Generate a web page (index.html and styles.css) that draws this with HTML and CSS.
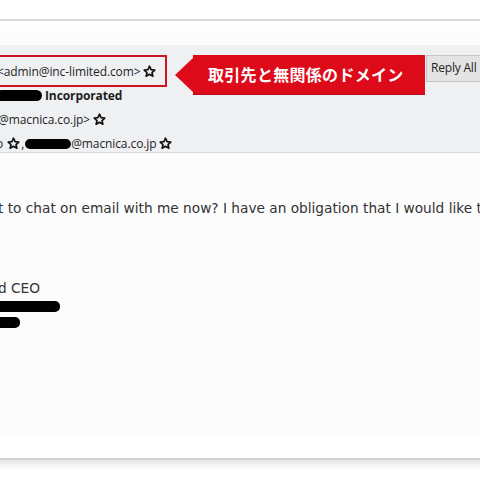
FILE: index.html
```html
<!DOCTYPE html>
<html>
<head>
<meta charset="utf-8">
<link rel="stylesheet" href="styles.css">
</head>
<body>
<div class="topbar"></div>
<div class="spacer"></div>
<div class="header">
  <div class="row row1">
    <div class="redbox">
      <span class="addr">&lt;admin@inc-limited.com&gt;</span>
      <svg class="star" viewBox="0 0 14 14"><path d="M7 1.3 8.7 5 12.7 5.4 9.7 8.1 10.6 12.1 7 10 3.4 12.1 4.3 8.1 1.3 5.4 5.3 5Z"/></svg>
    </div>
    <div class="callout">
      <div class="arrow"></div>
      <div class="callout-box">取引先と無関係のドメイン</div>
    </div>
    <div class="reply">Reply All</div>
  </div>
  <div class="row row2">
    <span class="blob blob-a"></span>
    <span class="bold">Incorporated</span>
  </div>
  <div class="row row3">
    <span class="shift3">@macnica.co.jp&gt;</span>
    <svg class="star" viewBox="0 0 14 14"><path d="M7 1.3 8.7 5 12.7 5.4 9.7 8.1 10.6 12.1 7 10 3.4 12.1 4.3 8.1 1.3 5.4 5.3 5Z"/></svg>
  </div>
  <div class="row row4">
    <span class="shift4">o</span>
    <svg class="star" viewBox="0 0 14 14"><path d="M7 1.3 8.7 5 12.7 5.4 9.7 8.1 10.6 12.1 7 10 3.4 12.1 4.3 8.1 1.3 5.4 5.3 5Z"/></svg>
    <span class="comma">,</span>
    <span class="blob blob-b"></span>
    <span>@macnica.co.jp</span>
    <svg class="star star-end" viewBox="0 0 14 14"><path d="M7 1.3 8.7 5 12.7 5.4 9.7 8.1 10.6 12.1 7 10 3.4 12.1 4.3 8.1 1.3 5.4 5.3 5Z"/></svg>
  </div>
</div>
<div class="body">
  <p class="line msg">t to chat on email with me now? I have an obligation that I would like to discuss with you.</p>
  <p class="line sig">d CEO</p>
  <div class="blob blob-c"></div>
  <div class="blob blob-d"></div>
</div>
<div class="footer-gap"></div>
<div class="bottom-line"></div>
<div class="shadow"></div>
</body>
</html>
```
FILE: styles.css
```css
html, body {
  margin: 0;
  padding: 0;
  background: #ffffff;
  overflow: hidden;
  width: 480px;
  height: 480px;
}
.topbar {
  height: 19px;
  border-bottom: 2px solid #d9d9d9;
}
.spacer {
  height: 24px;
  background: linear-gradient(#ffffff, #fbfbfc);
}
.header {
  position: relative;
  height: 108px;
  background: #eff0f2;
  border-bottom: 1px solid #d6d7d9;
  font-family: "Open Sans", "Noto Sans", sans-serif;
  font-size: 12px;
  letter-spacing: -0.1px;
  color: #1e1e1e;
  padding-top: 10px;
  box-sizing: border-box;
}
.row {
  display: flex;
  align-items: center;
  white-space: nowrap;
}
.row1 {
  height: 32px;
  align-items: flex-start;
}
.redbox {
  display: flex;
  align-items: center;
  height: 32px;
  box-sizing: border-box;
  border: 2px solid #cc1424;
  border-left: none;
  margin-left: -3px;
  padding-right: 10px;
  width: 170px;
  justify-content: space-between;
}
.addr {
  margin-right: 3px;
}
.star {
  width: 13px;
  height: 13px;
  fill: none;
  stroke: #111;
  stroke-width: 1.8;
  stroke-linejoin: round;
  flex: none;
}
.callout {
  display: flex;
  align-items: center;
  height: 40px;
  margin-left: 8px;
  flex: none;
}
.arrow {
  width: 0;
  height: 0;
  border-top: 17px solid transparent;
  border-bottom: 17px solid transparent;
  border-right: 18px solid #dd0a1a;
}
.callout-box {
  height: 40px;
  width: 232px;
  background: #dd0a1a;
  color: #ffffff;
  font-family: "Noto Sans CJK JP", sans-serif;
  font-weight: 700;
  font-size: 16px;
  letter-spacing: 0.3px;
  line-height: 38px;
  padding-left: 15px;
  box-sizing: border-box;
  border-bottom: 1px solid #b80a18;
}
.reply {
  margin-left: 1px;
  height: 27px;
  box-sizing: border-box;
  padding: 0 1px 0 4px;
  background: #e4e4e4;
  border: 1px solid #c5c5c5;
  border-right: none;
  line-height: 24px;
  font-size: 12px;
  letter-spacing: -0.2px;
  color: #222;
  flex: 1;
}
.row2 {
  height: 16px;
}
.row3 {
  height: 25px;
  margin-top: 4px;
}
.row4 {
  height: 23px;
}
.bold {
  font-weight: 700;
  margin-left: 3px;
}
.blob {
  display: inline-block;
  background: #000;
  border-radius: 6px;
}
.blob-a {
  width: 46px;
  height: 11px;
  margin-left: -4px;
}
.shift3 {
  margin-left: -2px;
  margin-right: 3px;
}
.shift4 {
  margin-left: -4px;
  margin-right: 4px;
}
.comma {
  margin-left: 1px;
}
.blob-b {
  width: 46px;
  height: 10px;
  margin-left: 1px;
  border-radius: 5px;
}
.star-end {
  margin-left: 3px;
}
.body {
  height: 281px;
  background: #fcfcfc;
  font-family: "DejaVu Sans", Verdana, sans-serif;
  font-size: 13.7px;
  color: #333;
  padding-top: 47px;
  box-sizing: border-box;
}
.line {
  margin: 0;
  white-space: nowrap;
  line-height: 17px;
}
.msg {
  margin-left: -2px;
}
.sig {
  margin-top: 63px;
  margin-left: -2px;
}
.blob-c {
  display: block;
  width: 64px;
  height: 11px;
  margin-top: 4px;
  margin-left: -4px;
  border-radius: 5px;
}
.blob-d {
  display: block;
  width: 24px;
  height: 11px;
  margin-top: 5px;
  margin-left: -4px;
  border-radius: 5px;
}
.footer-gap {
  height: 24px;
}
.bottom-line {
  height: 2px;
  background: #d2d2d2;
}
.shadow {
  height: 10px;
  background: linear-gradient(#e6e6e6, #ffffff);
}
```
